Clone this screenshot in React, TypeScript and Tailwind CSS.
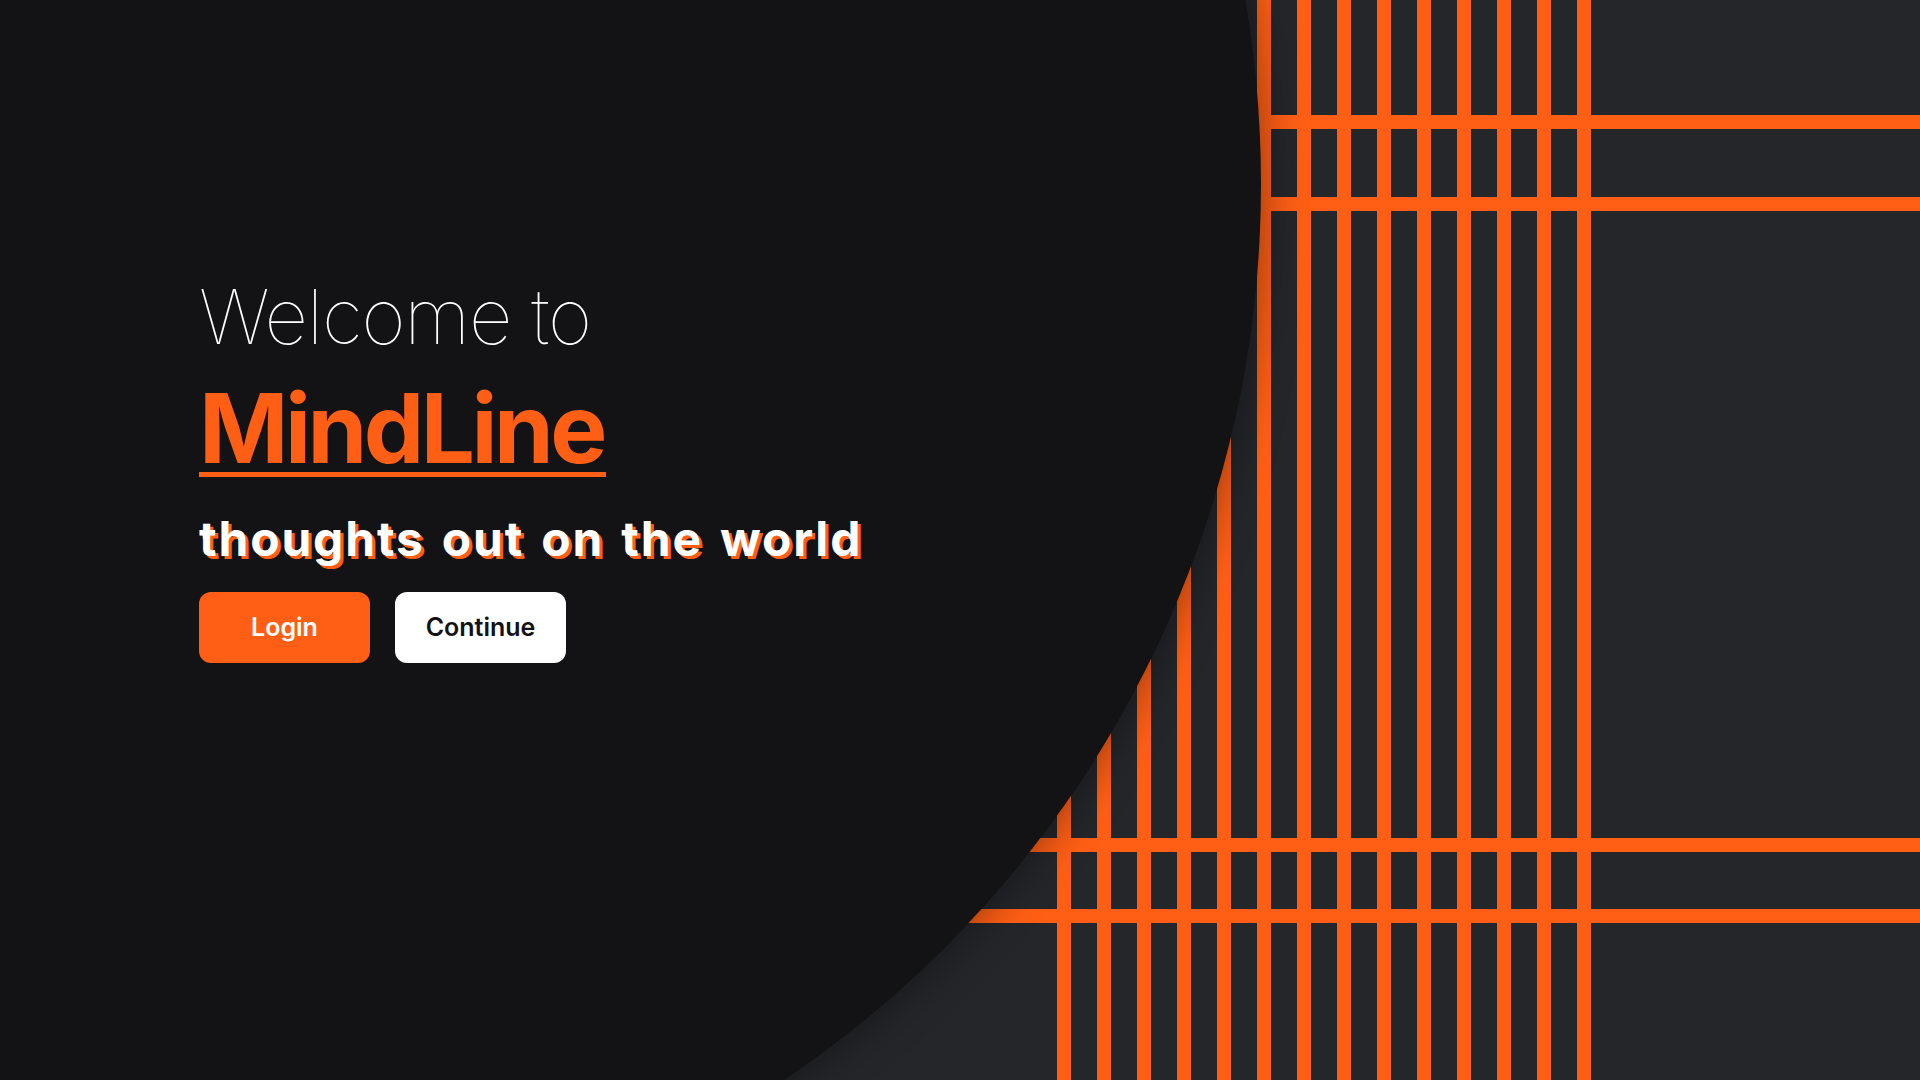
import React from "react";

const verticals = Array.from({ length: 14 }, (_, i) => 1057 + i * 40);
const horizontals = [115, 197, 838, 909];

export default function App() {
  return (
    <div className="relative w-full h-[1080px] overflow-hidden bg-[#25262a]" style={{ fontFamily: "Inter, 'Liberation Sans', sans-serif" }}>
      <svg className="absolute inset-0" width="1920" height="1080" viewBox="0 0 1920 1080">
        {horizontals.map((y) => (
          <rect key={"h" + y} x="0" y={y} width="1920" height="14" fill="#ff5f15" />
        ))}
        {verticals.map((x) => (
          <rect key={"v" + x} x={x} y="0" width="14" height="1080" fill="#ff5f15" />
        ))}
      </svg>
      <div className="absolute left-[-899px] top-[-896px] w-[2160px] h-[2160px] rounded-full bg-[#131315] shadow-[0_0_45px_rgba(0,0,0,0.45)]" />
      <div className="relative flex flex-col items-start pl-[199px] pt-[278px]">
        <h2 className="text-[76px] leading-none font-thin text-white tracking-[-1.2px]">Welcome to</h2>
        <h1 className="mt-[30px] text-[96px] leading-[88px] font-bold text-[#ff5f15] border-b-[5px] border-[#ff5f15] tracking-[-3.5px] pr-[2px]">
          MindLine
        </h1>
        <p className="mt-[38px] text-[48px] leading-none font-bold text-white tracking-[1.8px] [word-spacing:4px] [text-shadow:3px_3px_0_#ff5f15]">
          thoughts out on the world
        </p>
        <div className="mt-[29px] flex gap-[25px]">
          <button className="w-[171px] h-[71px] rounded-[12px] bg-[#ff5f15] text-white text-[25px] font-semibold">Login</button>
          <button className="w-[171px] h-[71px] rounded-[12px] bg-white text-[#131315] text-[25px] font-semibold">Continue</button>
        </div>
      </div>
    </div>
  );
}
